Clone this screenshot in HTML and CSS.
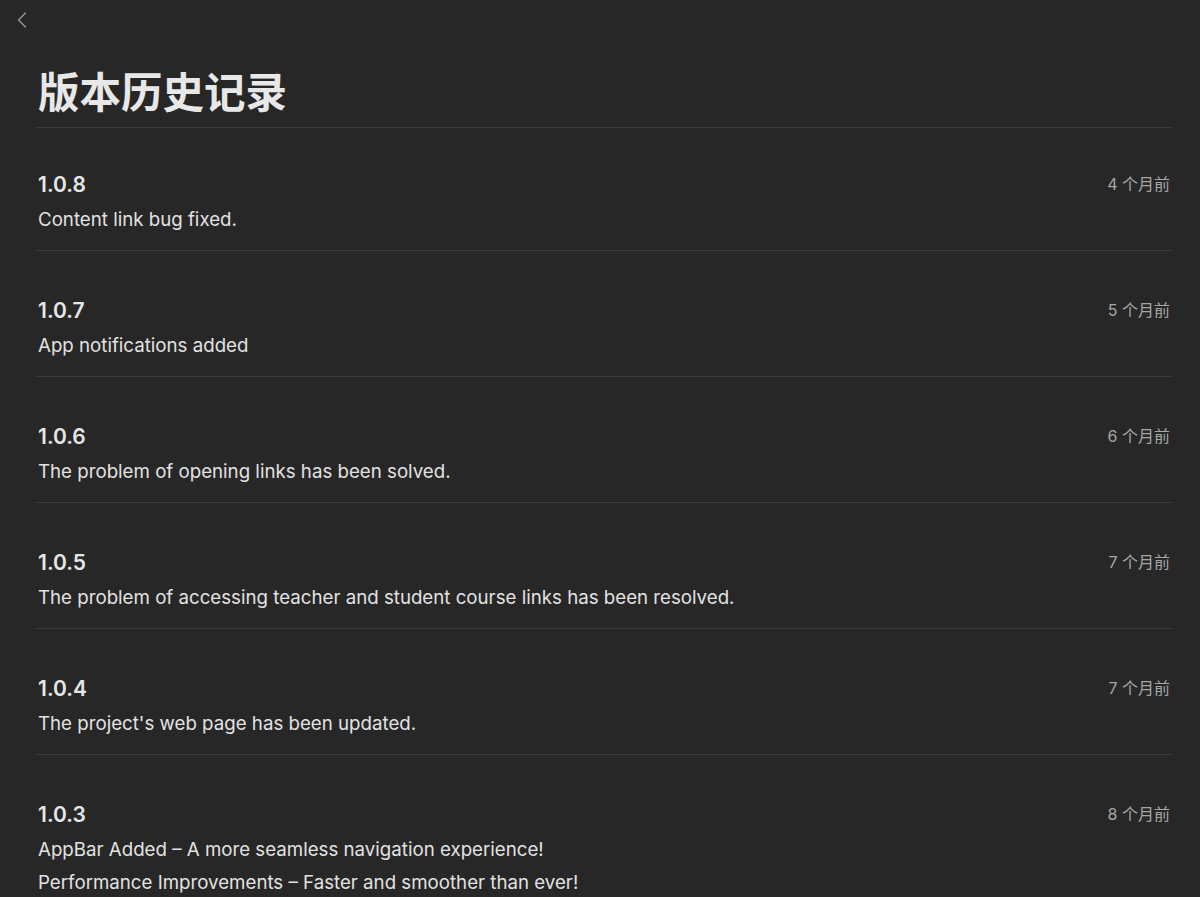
FILE: index.html
```html
<!DOCTYPE html>
<html lang="zh-CN">
<head>
<meta charset="utf-8">
<title>版本历史记录</title>
<link rel="stylesheet" href="styles.css">
</head>
<body>
<div class="topbar">
  <button class="back" aria-label="返回">
    <svg width="14" height="20" viewBox="0 0 14 20"><polyline points="10.5,3 3.5,10 10.5,17" fill="none" stroke="#9a9a9a" stroke-width="1.3" stroke-linecap="round" stroke-linejoin="round"/></svg>
  </button>
</div>
<main class="page">
  <h1 class="title">版本历史记录</h1>
  <ul class="list">
    <li class="row">
      <div class="info"><div class="ver">1.0.8</div><p class="desc">Content link bug fixed.</p></div>
      <div class="date">4 个月前</div>
    </li>
    <li class="row">
      <div class="info"><div class="ver">1.0.7</div><p class="desc">App notifications added</p></div>
      <div class="date">5 个月前</div>
    </li>
    <li class="row">
      <div class="info"><div class="ver">1.0.6</div><p class="desc">The problem of opening links has been solved.</p></div>
      <div class="date">6 个月前</div>
    </li>
    <li class="row">
      <div class="info"><div class="ver">1.0.5</div><p class="desc">The problem of accessing teacher and student course links has been resolved.</p></div>
      <div class="date">7 个月前</div>
    </li>
    <li class="row">
      <div class="info"><div class="ver">1.0.4</div><p class="desc">The project's web page has been updated.</p></div>
      <div class="date">7 个月前</div>
    </li>
    <li class="row">
      <div class="info"><div class="ver">1.0.3</div><p class="desc">AppBar Added – A more seamless navigation experience!</p><p class="desc">Performance Improvements – Faster and smoother than ever!</p></div>
      <div class="date">8 个月前</div>
    </li>
  </ul>
</main>
</body>
</html>
```

FILE: styles.css
```css
* { box-sizing: border-box; }
html, body {
  margin: 0;
  padding: 0;
  background: #272727;
  color: #e4e4e4;
  font-family: "Inter", "Noto Sans CJK SC", sans-serif;
}
.topbar {
  height: 40px;
  padding: 10px 0 0 15px;
}
.back {
  display: block;
  background: none;
  border: 0;
  padding: 0;
  margin: 0;
  width: 14px;
  height: 20px;
  cursor: pointer;
}
.back svg { display: block; }
.page {
  margin-left: 35px;
  width: 1138px;
}
.title {
  margin: 0;
  padding: 26px 3px 13px;
  font-family: "Noto Sans CJK SC", sans-serif;
  font-size: 41.5px;
  line-height: 48px;
  font-weight: 700;
  color: #e8e8e8;
  border-bottom: 1px solid #3b3b3b;
}
.list {
  list-style: none;
  margin: 0;
  padding: 0;
}
.row {
  display: flex;
  justify-content: space-between;
  align-items: flex-start;
  padding: 46px 3px 14px;
  border-bottom: 1px solid #3b3b3b;
}
.row:first-child {
  padding-top: 43px;
}
.ver {
  font-size: 21px;
  line-height: 28px;
  font-weight: 600;
  color: #e6e6e6;
  margin-bottom: 4px;
}
.desc {
  margin: 0;
  font-size: 18.7px;
  line-height: 33px;
  color: #e2e2e2;
}
.date {
  font-size: 16px;
  line-height: 26px;
  color: #a6a6a6;
}
```
